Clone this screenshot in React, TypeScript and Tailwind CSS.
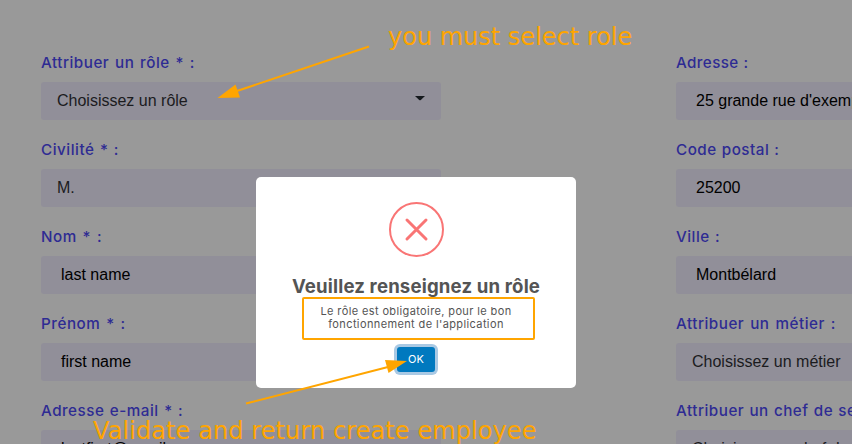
type FieldProps = {
  label: string;
  labelClass: string;
  value: string;
  select?: boolean;
  caret?: boolean;
};

const leftFields: FieldProps[] = [
  { label: 'Attribuer un rôle * :', labelClass: 'tracking-[0.52px] [word-spacing:1.2px]', value: 'Choisissez un rôle', select: true, caret: true },
  { label: 'Civilité * :', labelClass: 'tracking-[0.55px] [word-spacing:0.8px]', value: 'M.', select: true },
  { label: 'Nom * :', labelClass: 'tracking-[0.5px] [word-spacing:1.4px]', value: 'last name' },
  { label: 'Prénom * :', labelClass: 'tracking-[0.55px] [word-spacing:1.3px]', value: 'first name' },
  { label: 'Adresse e-mail * :', labelClass: 'tracking-[0.5px] [word-spacing:1px]', value: 'lastfirst@gmail.com' },
];

const rightFields: FieldProps[] = [
  { label: 'Adresse :', labelClass: 'tracking-[0.4px] [word-spacing:0.4px]', value: "25 grande rue d'exemple" },
  { label: 'Code postal :', labelClass: 'tracking-[0.5px] [word-spacing:0.6px]', value: '25200' },
  { label: 'Ville :', labelClass: 'tracking-[0.5px] [word-spacing:0.8px]', value: 'Montbélard' },
  { label: 'Attribuer un métier :', labelClass: 'tracking-[0.52px] [word-spacing:1.4px]', value: 'Choisissez un métier', select: true },
  { label: 'Attribuer un chef de service :', labelClass: 'tracking-[0.52px] [word-spacing:0.6px]', value: 'Choisissez un chef de service', select: true },
];

function Field({ label, labelClass, value, select, caret }: FieldProps) {
  return (
    <div className="h-[87px] shrink-0">
      <div className={`h-[29px] whitespace-nowrap font-[Inter,sans-serif] text-[15.2px] font-medium leading-[19px] text-[#2e2b93] ${labelClass}`}>
        {label}
      </div>
      <div
        className={`flex h-[38px] w-[400px] items-center justify-between whitespace-nowrap rounded-[3px] bg-[#918f99] pr-4 font-['Liberation_Sans',Arial,sans-serif] text-base ${select ? 'pl-4 text-[#1b1b1e]' : 'pl-5 text-black'}`}
      >
        <span>{value}</span>
        {caret && (
          <svg width="10" height="5" viewBox="0 0 10 5" className="mb-[5px]">
            <path d="M0 0H10L5.8 4Q5 4.6 4.2 4Z" fill="#15191d" />
          </svg>
        )}
      </div>
    </div>
  );
}

export default function App() {
  return (
    <div className="relative h-[444px] w-[852px] overflow-hidden bg-[#999999]">
      <div className="flex h-full gap-[235px] overflow-hidden pl-[41px] pt-[53px]">
        <div className="flex w-[400px] shrink-0 flex-col">
          {leftFields.map((field) => <Field key={field.label} {...field} />)}
        </div>
        <div className="flex w-[400px] shrink-0 flex-col">
          {rightFields.map((field) => <Field key={field.label} {...field} />)}
        </div>
      </div>

      <div role="dialog" className="absolute left-[256px] top-[177px] flex h-[211px] w-[320px] flex-col items-center rounded-[5px] bg-white pt-[25px] font-[Inter,sans-serif] text-[#545454]">
        <svg width="55" height="55" viewBox="0 0 55 55" fill="none" stroke="#f97575">
          <circle cx="27.5" cy="27.5" r="26.5" strokeWidth="2" />
          <path d="M18 18L37 37M37 18L18 37" strokeWidth="3" strokeLinecap="round" />
        </svg>
        <h2 className="mt-[18px] whitespace-nowrap text-[18.6px] font-bold leading-[22px] tracking-[0.16px]">Veuillez renseignez un rôle</h2>
        <p className="ml-[5px] h-[43px] w-[233px] shrink-0 rounded-[2px] border-2 border-[#ffa500] pr-[5px] pt-[6px] text-center text-[11px] leading-[13px] tracking-[0.38px]">
          Le rôle est obligatoire, pour le bon
          <br />
          fonctionnement de l'application
        </p>
        <button className="mt-[7px] h-[25px] w-[38px] rounded-[3px] bg-[#0079bf] text-[11px] text-white ring-[3px] ring-[#a9c9e4]">OK</button>
      </div>

      <svg className="absolute inset-0" width="852" height="444" viewBox="0 0 852 444" fill="#ffa500" stroke="#ffa500">
        <path d="M369 46.5L237 91" strokeWidth="2" />
        <path d="M217.5 98L235.5 84.5L240 97.5Z" stroke="none" />
        <path d="M246 403.5L388 367" strokeWidth="2" />
        <path d="M407 361L385 360L388.5 373Z" stroke="none" />
      </svg>
      <div className="absolute left-[388px] top-[23px] whitespace-nowrap font-['DejaVu_Sans',sans-serif] text-[24px] leading-[28px] text-[#ffa500]">you must select role</div>
      <div className="absolute left-[93px] top-[417px] whitespace-nowrap font-['DejaVu_Sans',sans-serif] text-[24px] leading-[28px] tracking-[0.09px] text-[#ffa500]">Validate and return create employee</div>
    </div>
  );
}
